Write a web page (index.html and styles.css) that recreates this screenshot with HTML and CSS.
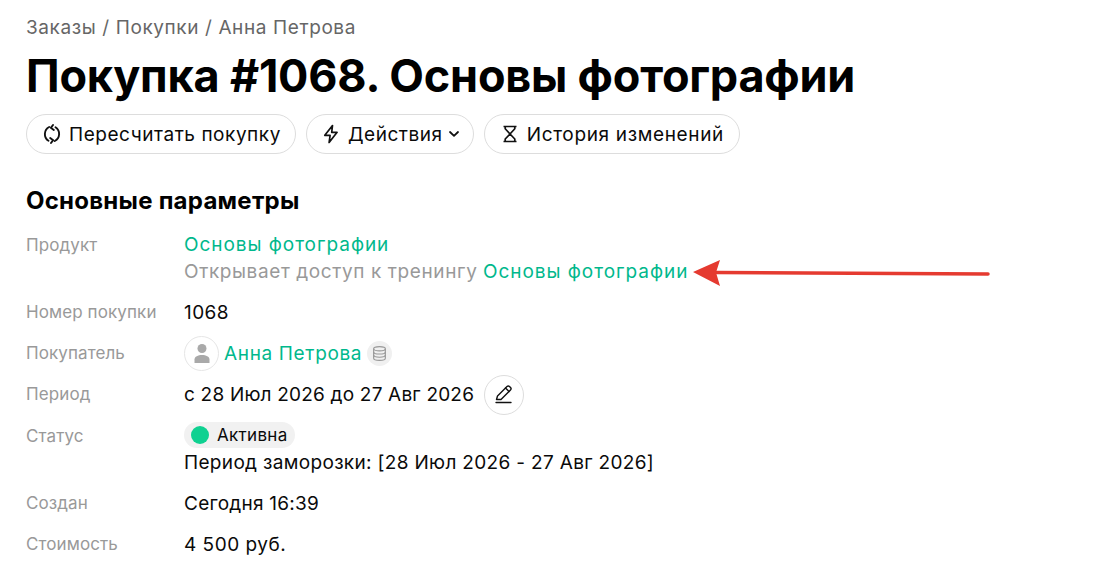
FILE: index.html
```html
<!DOCTYPE html>
<html lang="ru">
<head>
<meta charset="utf-8">
<title>Покупка #1068</title>
<link rel="stylesheet" href="styles.css">
</head>
<body>
<main class="page">
  <nav class="crumbs">Заказы / Покупки / Анна Петрова</nav>
  <h1 class="title">Покупка #1068. Основы фотографии</h1>
  <div class="actions">
    <button class="btn btn-a">
      <svg class="ico" viewBox="0 0 20 20" fill="none" stroke="#111" stroke-width="1.900" stroke-linecap="round" stroke-linejoin="round"><path d="M13.500 3.200A8 8 0 0 1 12.800 17"/><path d="M6.500 16.800A8 8 0 0 1 7.200 3"/><path d="M11 1 8.800 3.800 11.800 6"/><path d="M9 19l2.200-2.800L8.200 14"/></svg>
      Пересчитать покупку
    </button>
    <button class="btn btn-b">
      <svg class="ico" viewBox="0 0 20 20" fill="none" stroke="#111" stroke-width="1.700" stroke-linejoin="round"><path d="M11.500 1.500 3.800 11.300h5.300l-1 7.200 8-10.200h-5.400z"/></svg>
      Действия
      <svg class="chev" viewBox="0 0 10 6" fill="none" stroke="#111" stroke-width="1.800" stroke-linecap="round" stroke-linejoin="round"><path d="M1 1l4 3.800L9 1"/></svg>
    </button>
    <button class="btn btn-c">
      <svg class="ico" viewBox="0 0 20 20" fill="none" stroke="#111" stroke-width="1.700" stroke-linejoin="round"><path d="M3.500 2.500h13M3.500 17.500h13"/><path d="M5.200 2.500v2.200L10 10l4.800-5.300V2.500"/><path d="M10 10l-4.800 5v2.500M10 10l4.800 5v2.500"/></svg>
      История изменений
    </button>
  </div>
  <h2 class="section">Основные параметры</h2>
  <dl class="params">
    <dt class="lbl nudge">Продукт</dt>
    <dd class="val product">
      <a class="link">Основы фотографии</a><br>
      <span class="muted">Открывает доступ к тренингу</span> <a class="link">Основы фотографии</a>
    </dd>
    <dt class="lbl">Номер покупки</dt>
    <dd class="val sp-num">1068</dd>
    <dt class="lbl">Покупатель</dt>
    <dd class="val buyer">
      <span class="avatar"><svg viewBox="0 0 20 20" fill="#a9a9a9"><circle cx="10" cy="4.500" r="4.500"/><path d="M2.500 19v-3.500c0-3 3.500-4.500 7.500-4.500s7.500 1.500 7.500 4.500V19z"/></svg></span>
      <a class="link name">Анна Петрова</a>
      <span class="db"><svg viewBox="0 0 16 16" fill="none" stroke="#999" stroke-width="1.100"><ellipse cx="8" cy="3.500" rx="5.500" ry="2"/><path d="M2.500 3.500v9c0 1.100 2.500 2 5.500 2s5.500-.9 5.500-2v-9"/><path d="M2.500 6.500c0 1.100 2.500 2 5.500 2s5.500-.9 5.500-2M2.500 9.500c0 1.100 2.500 2 5.500 2s5.500-.9 5.500-2"/></svg></span>
    </dd>
    <dt class="lbl">Период</dt>
    <dd class="val period">
      с 28 Июл 2026 до 27 Авг 2026
      <span class="edit"><svg viewBox="0 1 20 20" fill="none" stroke="#111" stroke-width="1.400" stroke-linejoin="round" stroke-linecap="round"><path d="M2.500 15.500 3.500 12 13 2.500a1.800 1.800 0 0 1 2.500 0l1 1a1.800 1.800 0 0 1 0 2.500L7 15.500z"/><path d="M11.500 4l3.500 3.500"/><path d="M2 18.500h15"/></svg></span>
    </dd>
    <dt class="lbl nudge">Статус</dt>
    <dd class="val freeze">
      <span class="badge"><i class="dot"></i>Активна</span><br>
      Период заморозки: [28 Июл 2026 - 27 Авг 2026]
    </dd>
    <dt class="lbl">Создан</dt>
    <dd class="val sp-date">Сегодня 16:39</dd>
    <dt class="lbl">Стоимость</dt>
    <dd class="val sp-price">4 500 руб.</dd>
  </dl>
</main>
<svg class="arrow" viewBox="0 0 300 30" width="300" height="30"><path d="M24 14.500 L296 16" stroke="#e53a30" stroke-width="3.500" stroke-linecap="round"/><path d="M1 14 28 2 24 14.500 28 28z" fill="#e53a30"/></svg>
</body>
</html>
```
FILE: styles.css
```css
* { box-sizing: border-box; }
html, body { margin: 0; height: 579px; overflow: hidden; background: #fff; }
body { font-family: Inter, "Noto Sans", sans-serif; color: #0a0a0a; position: relative; }
.page { padding: 16px 26px 0; }
.crumbs { font-size: 19px; line-height: 24px; color: #666; letter-spacing: .6px; }
.title { margin: 7px 0 0; font-size: 45px; line-height: 58px; font-weight: 700; color: #000; white-space: nowrap; letter-spacing: -.2px; }
.actions { display: flex; gap: 10px; margin-top: 9px; }
.btn { display: flex; align-items: center; gap: 7px; height: 40px; padding: 0 15px; border: 1px solid #ddd; border-radius: 20px; background: #fff; font: inherit; font-size: 19px; letter-spacing: .55px; color: #0a0a0a; white-space: nowrap; }
.btn-a { padding-right: 14px; }
.btn-b { padding: 0 14px; }
.btn-c { letter-spacing: .65px; }
.ico { width: 20px; height: 20px; flex: none; }
.chev { width: 10px; height: 6px; margin-left: -1px; }
.section { margin: 33px 0 0; font-size: 24px; line-height: 28px; font-weight: 700; color: #000; letter-spacing: .25px; }
.params { display: grid; grid-template-columns: 158px 1fr; margin: 16px 0 0; row-gap: 14px; font-size: 19px; line-height: 27px; }
.lbl { font-size: 17px; color: #999; line-height: 27px; letter-spacing: .1px; }
.val { margin: 0; white-space: nowrap; letter-spacing: .2px; }
.nudge { padding-top: 1px; margin-bottom: -1px; }
.product { padding-top: 1px; line-height: 26.5px; }
.link { color: #00b88c; letter-spacing: .95px; }
.muted { color: #999; letter-spacing: .6px; }
.sp-num { letter-spacing: .4px; }
.sp-date { letter-spacing: .25px; }
.sp-price { letter-spacing: .5px; }
.freeze { letter-spacing: .33px; }
.buyer, .period { display: flex; align-items: center; gap: 5px; height: 27px; }
.name { letter-spacing: .65px; }
.avatar { width: 35px; height: 35px; border: 1px solid #e6e6e6; border-radius: 50%; display: flex; align-items: center; justify-content: center; }
.avatar svg { width: 20px; height: 20px; }
.db { width: 25px; height: 25px; border-radius: 50%; background: #f0f0f0; display: flex; align-items: center; justify-content: center; }
.db svg { width: 17px; height: 17px; }
.period { gap: 10px; }
.edit { width: 40px; height: 40px; border: 1px solid #ddd; border-radius: 50%; display: flex; align-items: center; justify-content: center; }
.edit svg { width: 20px; height: 20px; }
.badge { display: inline-flex; align-items: center; gap: 8px; height: 26px; padding: 0 8px 0 7px; border-radius: 13px; background: #f1f1f1; font-size: 17px; letter-spacing: .3px; vertical-align: top; }
.dot { width: 18px; height: 18px; border-radius: 50%; background: #0fd191; }
.arrow { position: absolute; left: 692px; top: 258px; }
```
